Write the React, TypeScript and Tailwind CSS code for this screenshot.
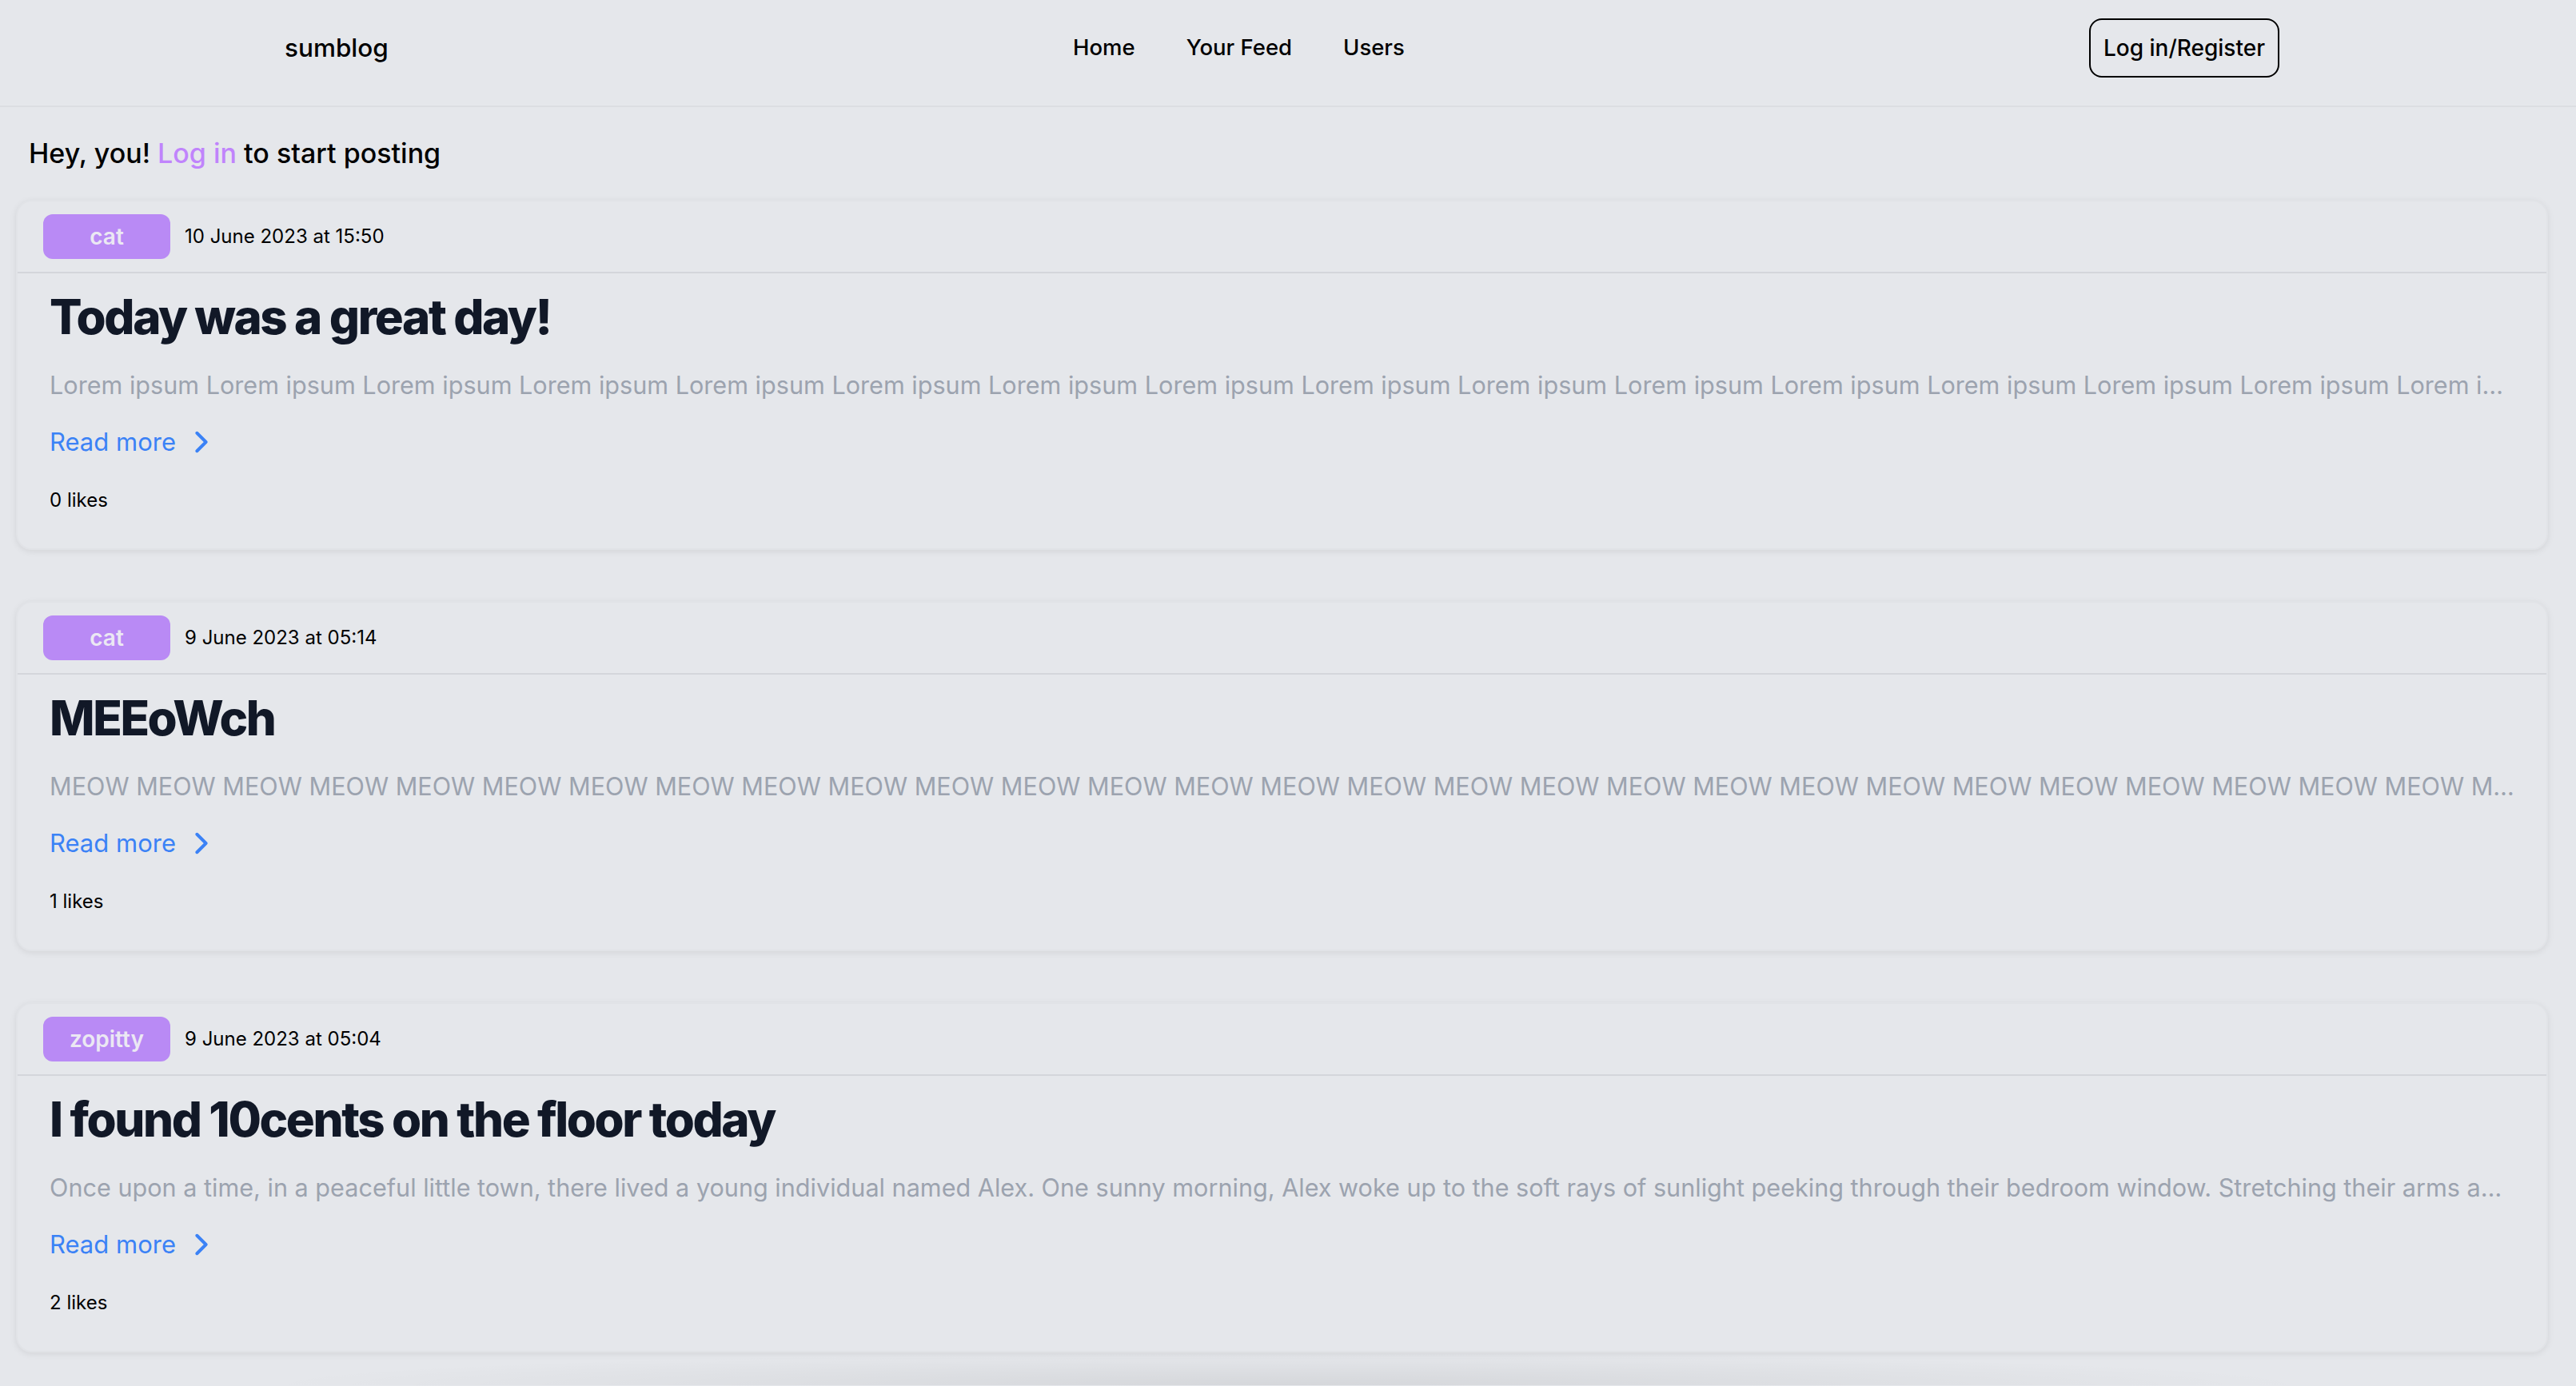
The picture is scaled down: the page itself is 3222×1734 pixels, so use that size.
const posts = [
  {
    tag: 'cat',
    date: '10 June 2023 at 15:50',
    title: 'Today was a great day!',
    excerpt: Array(40).fill('Lorem ipsum').join(' '),
    likes: 0,
  },
  {
    tag: 'cat',
    date: '9 June 2023 at 05:14',
    title: 'MEEoWch',
    excerpt: Array(60).fill('MEOW').join(' '),
    likes: 1,
  },
  {
    tag: 'zopitty',
    date: '9 June 2023 at 05:04',
    title: 'I found 10cents on the floor today',
    excerpt:
      'Once upon a time, in a peaceful little town, there lived a young individual named Alex. One sunny morning, Alex woke up to the soft rays of sunlight peeking through their bedroom window. Stretching their arms and yawning, Alex got out of bed and headed downstairs for breakfast.',
    likes: 2,
  },
];

function PostCard({ post }: { post: (typeof posts)[number] }) {
  return (
    <article className="ml-[20px] mr-[35px] rounded-[20px] border-2 border-[#e1e3e7] bg-[#e5e7eb] shadow-[0_2px_8px_rgba(0,0,0,0.08)]">
      <div className="flex items-center gap-[18px] border-b-2 border-[#d4d6db] px-[32px] pt-[16px] pb-[16px]">
        <span className="flex h-[56px] w-[159px] items-center justify-center rounded-[12px] bg-[#b98af5] text-[28px] font-semibold text-[#ebe8f3]">
          {post.tag}
        </span>
        <span className="text-[24px] text-black">{post.date}</span>
      </div>
      <div className="px-[40px] pt-[18px] pb-[44px]">
        <h2 className="text-[60px] leading-[72px] font-extrabold tracking-[-0.04em] text-[#111827]">{post.title}</h2>
        <p className="mt-[26px] truncate text-[30.6px] leading-[48px] text-[#9ca3af]">{post.excerpt}</p>
        <a className="mt-[23px] flex items-center text-[31px] leading-[48px] text-[#3b82f6]">
          Read more
          <svg className="ml-[14px] h-[36px] w-[36px]" fill="none" stroke="currentColor" strokeWidth={2.6} viewBox="0 0 24 24">
            <path strokeLinecap="round" strokeLinejoin="round" d="M8.25 4.5l7.5 7.5-7.5 7.5" />
          </svg>
        </a>
        <p className="mt-[33px] text-[24px] leading-[32px] text-black">{post.likes} likes</p>
      </div>
    </article>
  );
}

export default function App() {
  return (
    <div className="min-h-screen bg-[#e5e7eb] font-['Inter',sans-serif]">
      <header className="flex h-[134px] items-center justify-between border-b-2 border-[#dcdee2] pb-[12px] pl-[356px] pr-[371px]">
        <div className="text-[31.5px] font-medium text-black">sumblog</div>
        <nav className="flex gap-[64px] text-[27.5px] font-medium text-black">
          <a>Home</a>
          <a>Your Feed</a>
          <a>Users</a>
        </nav>
        <button className="h-[74px] rounded-[16px] border-2 border-black px-[16px] text-[28px] font-medium text-black">
          Log in/Register
        </button>
      </header>

      <div className="pl-[36px] pt-[30px] pb-[30px] text-[34px] leading-[56px] font-medium text-black">
        Hey, you! <a className="text-[#c084fc]">Log in</a> to start posting
      </div>

      <div className="flex flex-col gap-[64px]">
        {posts.map((p, i) => (
          <PostCard key={i} post={p} />
        ))}
      </div>
      <div className="h-[41px] bg-[radial-gradient(ellipse_40%_100%_at_50%_100%,rgba(0,0,0,0.07),transparent)]" />
    </div>
  );
}
